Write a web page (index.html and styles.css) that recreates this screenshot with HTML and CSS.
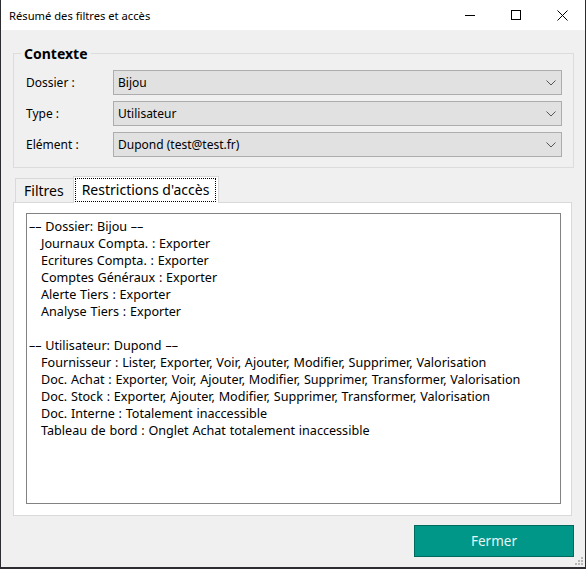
FILE: index.html
```html
<!DOCTYPE html>
<html lang="fr">
<head>
  <meta charset="UTF-8" />
  <title>Résumé des filtres et accès</title>
  <link rel="stylesheet" href="styles.css">
</head>
<body>
  <div class="window">
    <div class="titlebar">
      <span class="title">Résumé des filtres et accès</span>
      <div class="caption-buttons">
        <span class="caption-btn">
          <svg width="10" height="10" viewBox="0 0 10 10"><path d="M0 5.5h10" stroke="#000" stroke-width="1" fill="none"/></svg>
        </span>
        <span class="caption-btn">
          <svg width="10" height="10" viewBox="0 0 10 10"><rect x="0.5" y="0.5" width="9" height="9" stroke="#000" stroke-width="1" fill="none"/></svg>
        </span>
        <span class="caption-btn">
          <svg width="11" height="11" viewBox="0 0 11 11"><path d="M0.5 0.5L10.5 10.5M10.5 0.5L0.5 10.5" stroke="#000" stroke-width="1" fill="none"/></svg>
        </span>
      </div>
    </div>

    <div class="client">
      <fieldset class="groupbox">
        <legend>Contexte</legend>
        <div class="form-grid">
          <label>Dossier :</label>
          <div class="combo"><span>Bijou</span><svg width="10" height="6" viewBox="0 0 10 6"><path d="M0.5 0.5L5 5L9.5 0.5" stroke="#555" stroke-width="1" fill="none"/></svg></div>
          <label>Type :</label>
          <div class="combo"><span>Utilisateur</span><svg width="10" height="6" viewBox="0 0 10 6"><path d="M0.5 0.5L5 5L9.5 0.5" stroke="#555" stroke-width="1" fill="none"/></svg></div>
          <label>Elément :</label>
          <div class="combo"><span>Dupond (test@test.fr)</span><svg width="10" height="6" viewBox="0 0 10 6"><path d="M0.5 0.5L5 5L9.5 0.5" stroke="#555" stroke-width="1" fill="none"/></svg></div>
        </div>
      </fieldset>

      <div class="tabs">
        <div class="tab-strip">
          <span class="tab">Filtres</span>
          <span class="tab active"><span class="focus">Restrictions d'accès</span></span>
        </div>
        <div class="tab-panel">
          <div class="textbox">
            <div class="line">–– Dossier: Bijou ––</div>
            <div class="line indent">Journaux Compta. : Exporter</div>
            <div class="line indent">Ecritures Compta. : Exporter</div>
            <div class="line indent">Comptes Généraux : Exporter</div>
            <div class="line indent">Alerte Tiers : Exporter</div>
            <div class="line indent">Analyse Tiers : Exporter</div>
            <div class="line">&nbsp;</div>
            <div class="line">–– Utilisateur: Dupond ––</div>
            <div class="line indent">Fournisseur : Lister, Exporter, Voir, Ajouter, Modifier, Supprimer, Valorisation</div>
            <div class="line indent">Doc. Achat : Exporter, Voir, Ajouter, Modifier, Supprimer, Transformer, Valorisation</div>
            <div class="line indent">Doc. Stock : Exporter, Ajouter, Modifier, Supprimer, Transformer, Valorisation</div>
            <div class="line indent">Doc. Interne : Totalement inaccessible</div>
            <div class="line indent">Tableau de bord : Onglet Achat totalement inaccessible</div>
          </div>
        </div>
      </div>

      <div class="footer">
        <button class="btn-close">Fermer</button>
      </div>
    </div>

    <svg class="grip" width="9" height="9" viewBox="0 0 9 9">
      <rect x="7" y="1" width="2" height="2" fill="#b8b8b8"/>
      <rect x="4" y="4" width="2" height="2" fill="#b8b8b8"/>
      <rect x="7" y="4" width="2" height="2" fill="#b8b8b8"/>
      <rect x="1" y="7" width="2" height="2" fill="#b8b8b8"/>
      <rect x="4" y="7" width="2" height="2" fill="#b8b8b8"/>
      <rect x="7" y="7" width="2" height="2" fill="#b8b8b8"/>
    </svg>
  </div>
</body>
</html>
```

FILE: styles.css
```css
* {
  margin: 0;
  padding: 0;
  box-sizing: border-box;
}
body {
  background-color: #2b2d33;
  font-family: 'Noto Sans', 'Open Sans', sans-serif;
  font-size: 12px;
  color: #000;
  padding-left: 1px;
}
.window {
  position: relative;
  width: 584px;
  height: 567px;
  background-color: #f0f0f0;
  display: flex;
  flex-direction: column;
}
.titlebar {
  height: 30px;
  background-color: #fff;
  display: flex;
  align-items: center;
  justify-content: space-between;
}
.title {
  padding-left: 8px;
  font-size: 11.2px;
}
.caption-buttons {
  display: flex;
  height: 100%;
}
.caption-btn {
  width: 46px;
  height: 100%;
  display: flex;
  align-items: center;
  justify-content: center;
}

.client {
  flex: 1;
  display: flex;
  flex-direction: column;
  padding: 14px 11px 0 12px;
}
.groupbox {
  border: 1px solid #dcdcdc;
  padding: 7px 11px 10px 12px;
}
.groupbox legend {
  font-weight: bold;
  font-size: 14px;
  line-height: 19px;
  margin-left: -5px;
  padding: 0 3px;
}
.form-grid {
  display: grid;
  grid-template-columns: 87px 1fr;
  row-gap: 6px;
  align-items: center;
}
.combo {
  height: 25px;
  background-color: #e1e1e1;
  border: 1px solid #adadad;
  display: flex;
  align-items: center;
  justify-content: space-between;
  padding: 0 5px 0 4px;
}

.tabs {
  margin-top: 8px;
  margin-right: 2px;
}
.tab-strip {
  display: flex;
  align-items: flex-end;
  height: 26px;
  padding-left: 2px;
}
.tab {
  height: 24px;
  padding: 0 9px 0 8px;
  border: 1px solid #d9d9d9;
  border-bottom: none;
  font-size: 14px;
  display: flex;
  align-items: center;
  background-color: #f0f0f0;
}
.tab.active {
  height: 27px;
  margin-left: -1px;
  margin-bottom: -1px;
  padding: 0 3px 0 2px;
  background-color: #fff;
  position: relative;
}
.tab .focus {
  outline: 1px dotted #000;
  padding: 0 6px;
  line-height: 22px;
}
.tab-panel {
  height: 314px;
  background-color: #fff;
  border: 1px solid #d9d9d9;
  padding: 10px 10px 11px 12px;
}
.textbox {
  height: 100%;
  border: 1px solid #828282;
  padding: 4px 2px;
  font-size: 12.6px;
  word-spacing: 0.5px;
}
.line {
  line-height: 17px;
  white-space: nowrap;
}
.line.indent {
  padding-left: 12px;
}

.footer {
  display: flex;
  justify-content: flex-end;
  padding-top: 9px;
}
.btn-close {
  width: 160px;
  height: 32px;
  background-color: #009688;
  border: 1px solid #00695c;
  color: #e8f5f3;
  font-family: inherit;
  font-size: 13.5px;
}
.grip {
  position: absolute;
  right: 2px;
  bottom: 2px;
}
```
